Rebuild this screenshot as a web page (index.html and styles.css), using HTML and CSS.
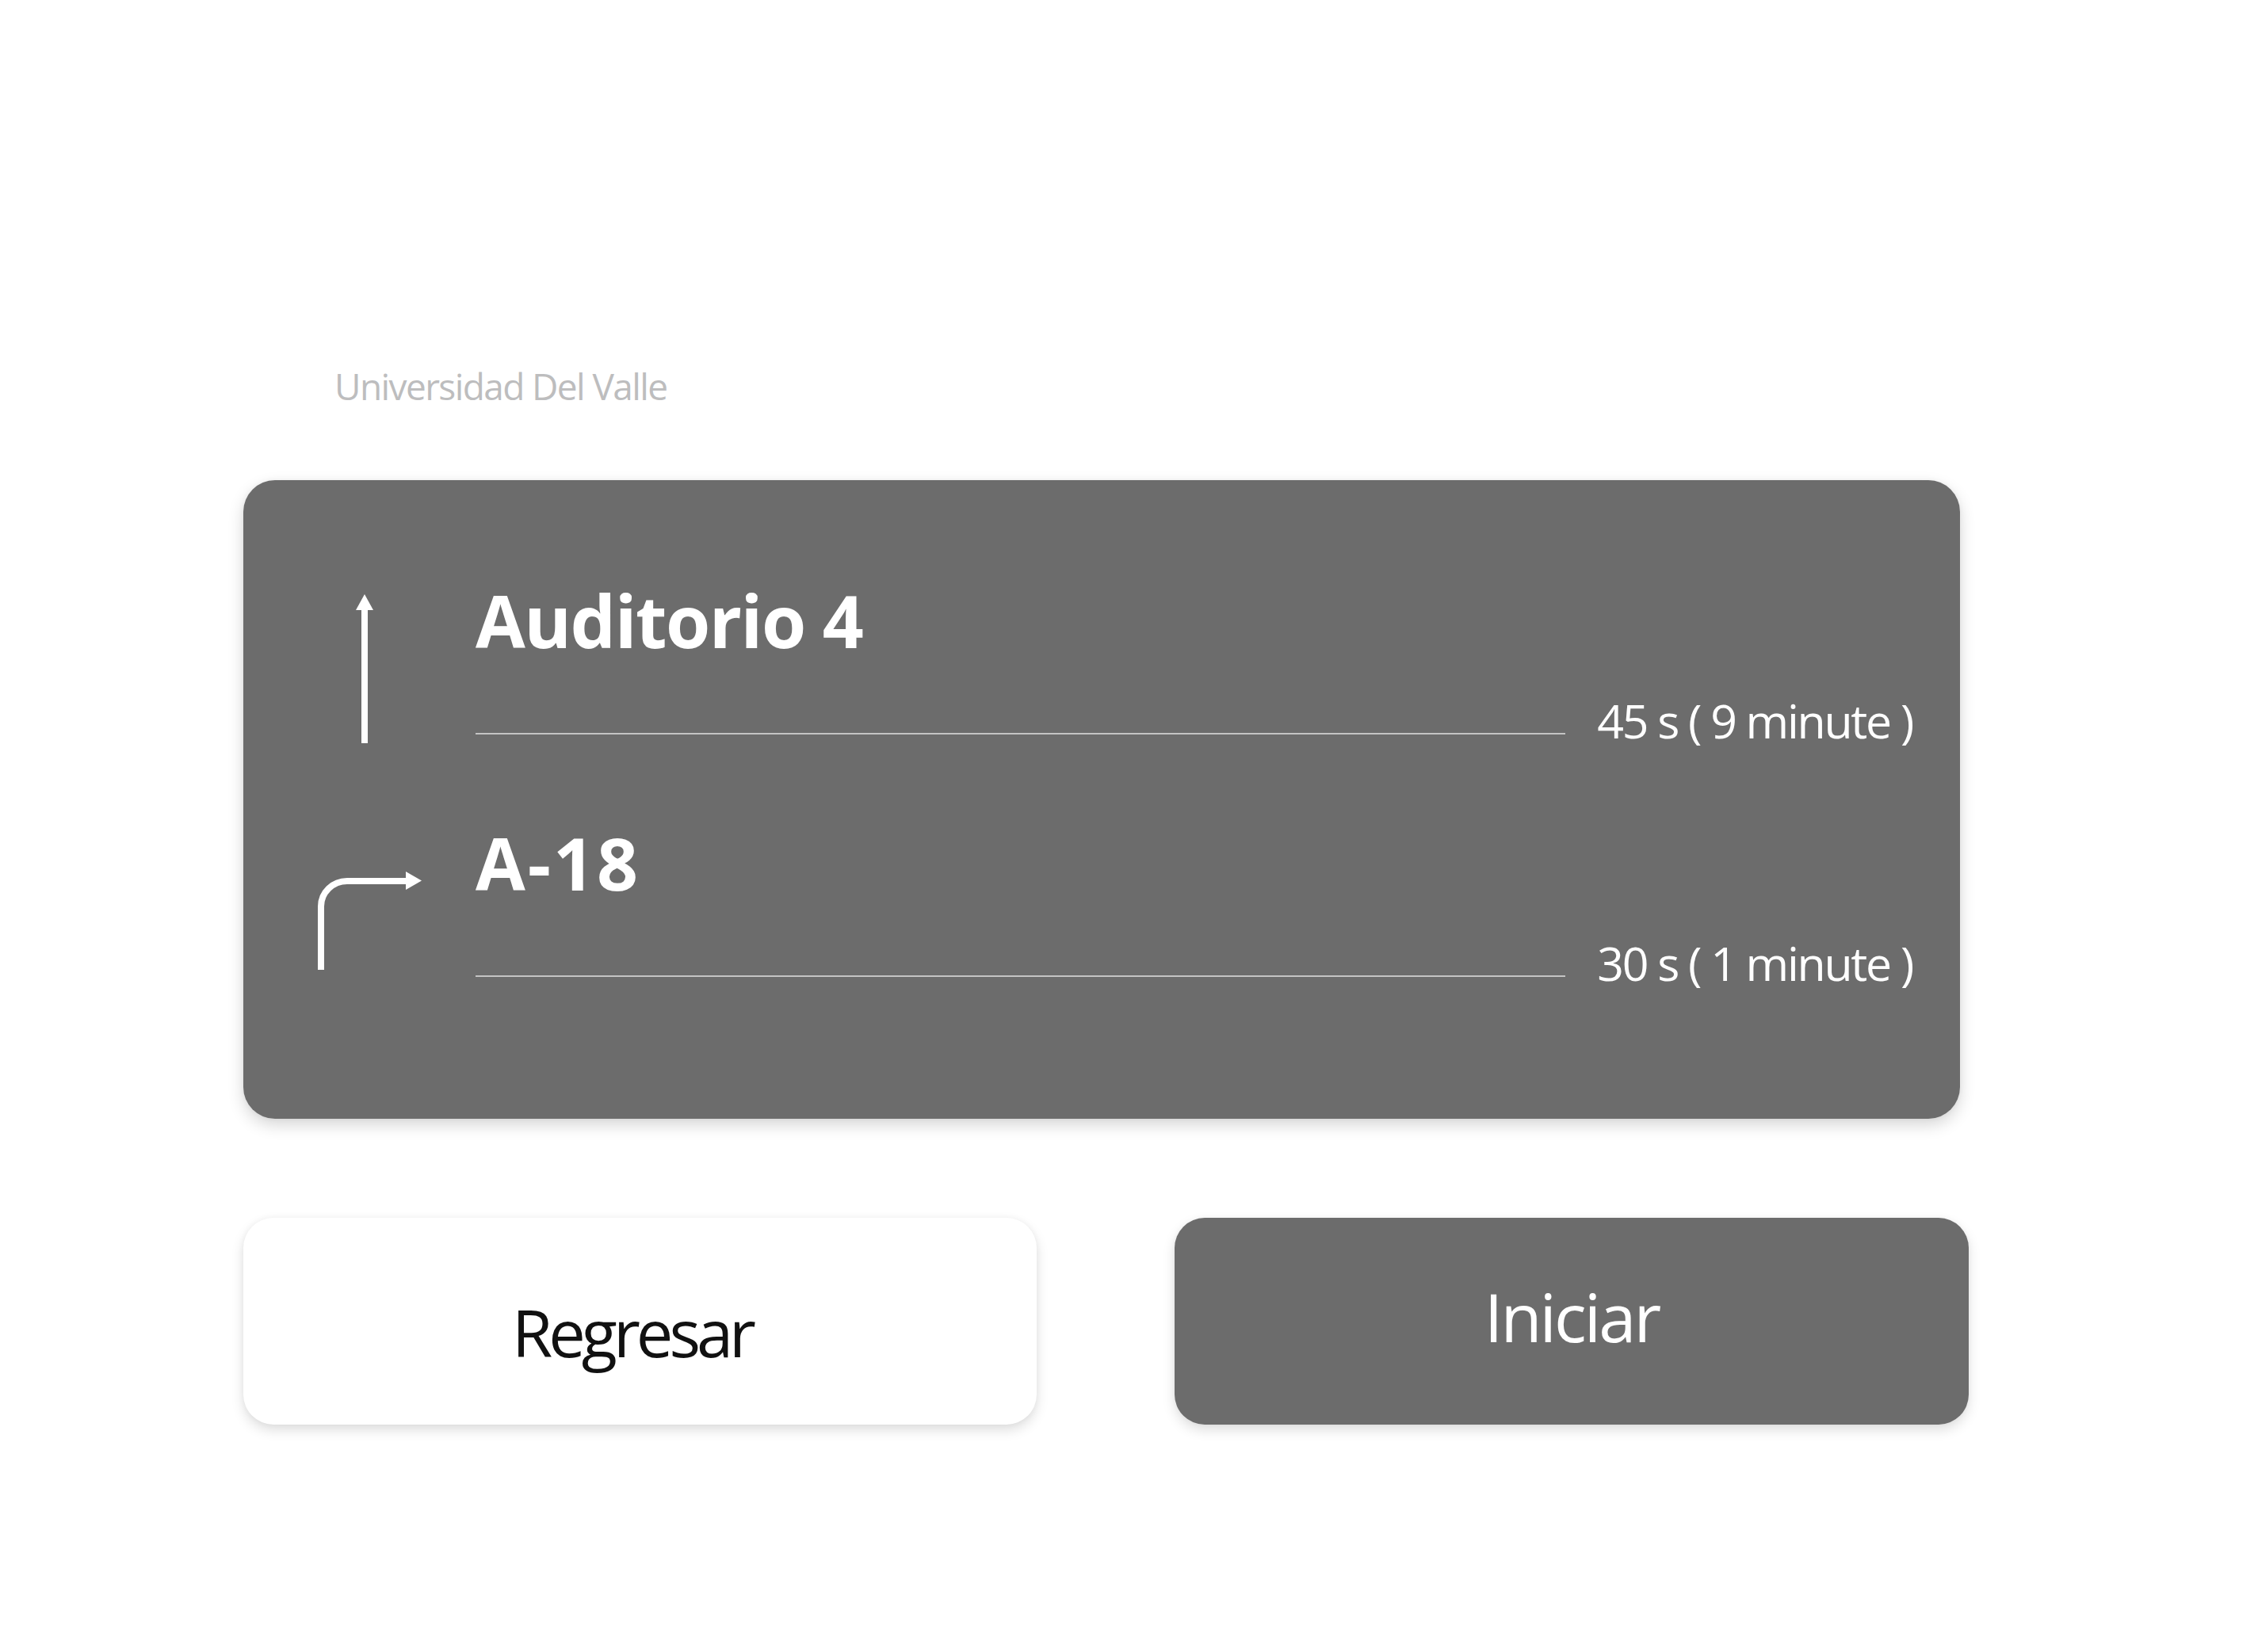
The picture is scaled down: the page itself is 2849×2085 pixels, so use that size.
FILE: index.html
```html
<!DOCTYPE html>
<html lang="es">
<head>
<meta charset="utf-8">
<title>Navegación</title>
<link rel="stylesheet" href="styles.css">
</head>
<body>
<main class="screen">
  <p class="brand">Universidad Del Valle</p>

  <section class="route-card">
    <div class="step">
      <div class="step-icon">
        <svg class="icon-up" width="22" height="188" viewBox="0 0 22 188" aria-hidden="true">
          <polygon points="11,0 0,20 22,20" fill="#fff"/>
          <rect x="7" y="18" width="8" height="170" fill="#fff"/>
        </svg>
      </div>
      <div class="step-body">
        <h2 class="step-title">Auditorio 4</h2>
        <div class="step-meta">
          <span class="step-rule"></span>
          <span class="step-time">45 s ( 9 minute )</span>
        </div>
      </div>
    </div>

    <div class="step step-second">
      <div class="step-icon">
        <svg class="icon-turn" width="134" height="124" viewBox="0 0 134 124" aria-hidden="true">
          <path d="M7 124 V44 A33 32 0 0 1 40 12 H116" fill="none" stroke="#fff" stroke-width="8"/>
          <polygon points="114,0 134,11.5 114,23" fill="#fff"/>
        </svg>
      </div>
      <div class="step-body">
        <h2 class="step-title step-title-code">A-18</h2>
        <div class="step-meta">
          <span class="step-rule"></span>
          <span class="step-time">30 s ( 1 minute )</span>
        </div>
      </div>
    </div>
  </section>

  <div class="actions">
    <button class="btn btn-back" type="button">Regresar</button>
    <button class="btn btn-start" type="button">Iniciar</button>
  </div>
</main>
</body>
</html>
```

FILE: styles.css
```css
html, body {
  margin: 0;
  padding: 0;
  background: #ffffff;
}

body {
  font-family: "Open Sans", "Noto Sans", "DejaVu Sans", sans-serif;
  width: 2849px;
  min-height: 2085px;
}

.screen {
  padding: 464px 0 0 307px;
}

.brand {
  margin: 0 0 0 115px;
  font-size: 46px;
  line-height: 46px;
  letter-spacing: -1.6px;
  color: #bdbdbe;
}

.route-card {
  margin-top: 96px;
  width: 2166px;
  box-sizing: border-box;
  padding: 127px 60px 167px 0;
  background: #6c6c6c;
  border-radius: 40px;
  box-shadow: 0 8px 20px rgba(0, 0, 0, 0.16), 0 0 6px rgba(0, 0, 0, 0.05);
  color: #ffffff;
}

.step {
  display: grid;
  grid-template-columns: 293px 1fr;
}

.step-second {
  margin-top: 100px;
}

.step-icon {
  align-self: start;
}

.icon-up {
  display: block;
  margin: 17px 0 0 142px;
}

.icon-turn {
  display: block;
  margin: 61px 0 0 91px;
}

.step-title {
  margin: 0;
  font-size: 91px;
  line-height: 100px;
  font-weight: 700;
  letter-spacing: -1.5px;
}

.step-title-code {
  letter-spacing: 3px;
}

.step-meta {
  display: flex;
  align-items: flex-end;
  margin-top: 46px;
  height: 60px;
}

.step-rule {
  flex: 1;
  height: 2px;
  margin: 0 40px 12px 0;
  background: #c4c4c4;
}

.step-time {
  font-size: 59px;
  line-height: 60px;
  letter-spacing: -2.3px;
  white-space: nowrap;
}

.actions {
  display: flex;
  gap: 174px;
  margin-top: 125px;
}

.btn {
  display: flex;
  align-items: center;
  justify-content: center;
  box-sizing: border-box;
  height: 261px;
  border: none;
  border-radius: 38px;
  font-family: "Open Sans", "Noto Sans", "DejaVu Sans", sans-serif;
  cursor: pointer;
}

.btn-back {
  width: 1001px;
  padding: 26px 20px 0 0;
  background: #ffffff;
  color: #111111;
  font-size: 83px;
  line-height: 83px;
  letter-spacing: -5px;
  box-shadow: 0 7px 16px rgba(0, 0, 0, 0.13), 0 0 8px rgba(0, 0, 0, 0.04);
}

.btn-start {
  width: 1002px;
  padding: 0 0 13px 0;
  background: #6c6c6c;
  color: #ffffff;
  font-size: 85px;
  line-height: 85px;
  letter-spacing: -3px;
  box-shadow: 0 7px 16px rgba(0, 0, 0, 0.13), 0 0 6px rgba(0, 0, 0, 0.04);
}
```
